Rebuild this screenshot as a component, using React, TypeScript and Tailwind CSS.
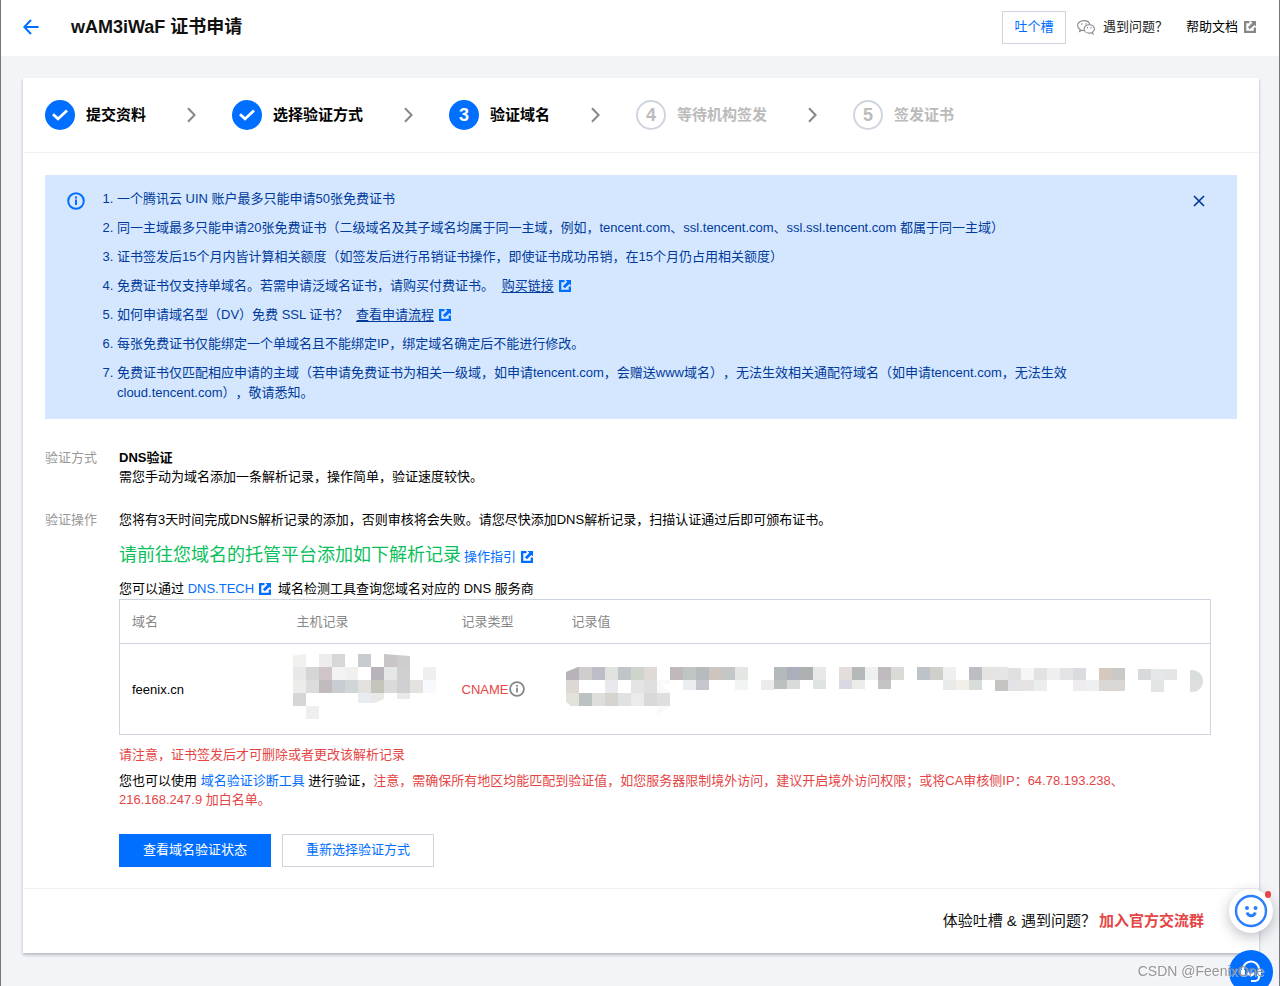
import React from "react";

type Block = [x: number, y: number, w: number, h: number, fill: string];

const hostRows: string[][] = [
  ["#f1f0ef", "", "#ededed", "#d6d7d7", "", "#c8ccd0", "", "#cac6c6", "#cdcdcf"],
  ["#e8e8e8", "#d5d5d6", "#cfc5c8", "#f3f3f3", "#f2f0ef", "", "#b9b4bb", "#e6e6e6", "#d0d0d2", "", "#efefef"],
  ["#ececeb", "#dcdcdc", "#c2bbbd", "#c9ccd0", "#d0d5d5", "#e2e1df", "#c4c4bb", "#dadada", "#d0d0d2", "#e3e2e1", "#f8f9fd"],
  ["#d6d6d6", "", "", "", "", "#e8ecf1", "#e9e9e9", "", "#e9e9e9"],
  ["", "#efefef"],
];

const valueTop: string[] = [
  "#b8b2b9", "#d0cecc", "#bdbdc9", "#dfe2de", "#bfc5c9", "#cfd4cb", "#dfdad6", "",
  "#c0b9bc", "#bfc5c3", "#b8bbbe", "#cfc5bf", "#c3c7c5", "#e3e6e3", "", "",
  "#b4b9bb", "#abafbb", "#acb0b0", "#e6e8ea", "", "#e3dedc", "#b5b9ba", "#eff1f1",
  "#c0bcbd", "#dadbd6", "", "#bdc3c8", "#cfd0c9", "#efefef", "", "#bdbec4",
  "#e5e4e3", "#e5e5e5", "#e0e0e0", "#f6f6f6", "#e0e3e1", "#efefef", "#e4e3e6", "#dbdcdf",
  "", "#d5c8be", "#c9c9c5", "", "#d7d9da", "#e4e8e8", "#e4e6e5",
];

const valueMiddle: string[] = [
  "#ddd8d3", "", "", "#e8e9ec", "", "#e4e4e3", "#dfdfe1", "",
  "", "#ebeef0", "#c5c6ce", "", "", "#f2f4f4", "", "#ebebeb",
  "#bbc0c1", "#d9dbda", "", "#dee3e4", "", "#d8d9e2", "#ebebea", "",
  "#c3c5c5", "", "", "", "", "#e9ebea", "#f2eeea", "#d8ddd9",
  "", "#c5c4c3", "#e2e3e6", "#e5e4e3", "#eceeee", "", "", "#eeecee",
  "#efefef", "#dad7d4", "#dad7d4", "", "", "#e2e5e4",
];

const valueBottom: string[] = [
  "#e3e2da", "#bcc1c2", "#dededd", "#d5d4cf", "#e0e1e3", "#ebebeb", "#d9d9d9", "#dfdfdf",
];

function toBlocks(row: string[], y: number, height: (i: number) => number, top: (i: number) => number = () => 0): Block[] {
  return row
    .map((fill, i): Block => [i * 13, y + top(i), 13, height(i) - top(i), fill])
    .filter((b) => b[4] !== "");
}

const hostBlocks: Block[] = hostRows.flatMap((row, r) =>
  toBlocks(row, r * 13, (i) => (r === 3 && i === 8 ? 6 : r === 3 && i > 4 ? 10 : 13)),
);

const drop = (i: number) => (i > 43 ? 2 : i > 33 ? 1 : 0);

const valueBlocks: Block[] = [
  ...toBlocks(valueTop, 13, () => 13, drop),
  ...toBlocks(valueMiddle, 26, (i) => (i < 8 ? 13 : i > 43 ? 12 : i > 32 ? 11 : i > 15 && i < 25 ? 9 : 10)),
  ...toBlocks(valueBottom, 39, () => 13),
];

function Blocks({ blocks }: { blocks: Block[] }) {
  return (
    <>
      {blocks.map(([x, y, w, h, fill]) => (
        <rect key={`${x}-${y}`} x={x} y={y} width={w} height={h} fill={fill} />
      ))}
    </>
  );
}

function ExternalIcon({ className = "" }: { className?: string }) {
  return (
    <svg viewBox="0 0 12 12" className={`inline-block h-3 w-3 ${className}`} fill="currentColor" aria-hidden="true">
      <path d="M0 0h5.500v2.300H2.300v7.400h7.400V6.500H12V12H0z" />
      <path d="M6.500 0H12v5.500L10.300 3.900 5.900 8.300 3.900 6.300l4.400-4.500z" />
    </svg>
  );
}

function WechatIcon() {
  return (
    <svg viewBox="0 0 18 15" className="h-[15px] w-[18px]" fill="none" stroke="#888" strokeWidth="1.1" aria-hidden="true">
      <path d="M7.2 10.6c-.8 0-1.6-.1-2.3-.4L2.6 11.4l.6-2C1.600 8.500.6 7.100.6 5.600.600 2.800 3.400.6 6.800.6c3 0 5.500 1.700 6.100 4" />
      <path d="M12.300 4.700c-2.900 0-5.200 1.900-5.200 4.200s2.300 4.200 5.200 4.200c.6 0 1.200-.1 1.800-.3l1.900 1-.5-1.700c1.200-.8 1.900-1.900 1.900-3.200 0-2.300-2.300-4.200-5.100-4.200z" />
      <g fill="#888" stroke="none">
        <circle cx="4.700" cy="4" r=".8" />
        <circle cx="8.900" cy="4" r=".8" />
        <circle cx="10.500" cy="7.700" r=".7" />
        <circle cx="14" cy="7.700" r=".7" />
      </g>
    </svg>
  );
}

function InfoIcon({ className = "" }: { className?: string }) {
  return (
    <svg viewBox="0 0 18 18" className={className} fill="none" stroke="currentColor" strokeWidth="2" aria-hidden="true">
      <circle cx="9" cy="9" r="7.800" />
      <path d="M9 7.500v5.500M9 4.500v2" />
    </svg>
  );
}

const steps = [
  { label: "提交资料", state: "done" },
  { label: "选择验证方式", state: "done" },
  { label: "验证域名", state: "current" },
  { label: "等待机构签发", state: "todo" },
  { label: "签发证书", state: "todo" },
];

function Steps() {
  return (
    <ol className="flex h-[75px] items-center border-b border-[#f2f2f4] px-[22px]">
      {steps.map((step, i) => (
        <li key={step.label} className="flex items-center text-[15px] font-bold">
          {step.state === "todo" ? (
            <span className="flex h-[30px] w-[30px] items-center justify-center rounded-full border-2 border-[#cfd5de] text-lg text-[#bbb]">
              {i + 1}
            </span>
          ) : (
            <span className="flex h-[30px] w-[30px] items-center justify-center rounded-full bg-[#006eff] text-lg text-white">
              {step.state === "done" ? (
                <svg viewBox="0 0 16 12" className="h-3 w-4" fill="none" stroke="#fff" strokeWidth="2.800" aria-hidden="true">
                  <path d="M1 5.300l5 4.600L15 1.500" />
                </svg>
              ) : (
                i + 1
              )}
            </span>
          )}
          <span className={step.state === "todo" ? "ml-[11px] text-[#bbb]" : "ml-[11px] text-black"}>{step.label}</span>
          {i < steps.length - 1 && (
            <span className="flex w-[86px] justify-center pl-1">
              <svg viewBox="0 0 9 16" className="h-4 w-[9px]" fill="none" stroke="#888" strokeWidth="2" aria-hidden="true">
                <path d="M1 1.200L7.600 8 1 14.800" />
              </svg>
            </span>
          )}
        </li>
      ))}
    </ol>
  );
}

function NoticeLink({ children }: { children: React.ReactNode }) {
  return (
    <a href="#" className="ml-1">
      <span className="underline underline-offset-2">{children}</span>
      <ExternalIcon className="ml-[5px] align-[-2px] text-[#006eff]" />
    </a>
  );
}

function Notice() {
  return (
    <section className="flex items-start bg-[#d5e7ff] pt-[14px] pr-8 pb-4 pl-[22px] text-[#003b9b]">
      <InfoIcon className="mt-[3px] h-[18px] w-[18px] text-[#006eff]" />
      <ol className="ml-8 flex flex-1 list-decimal flex-col gap-[9px] pr-[60px] leading-5">
        <li>一个腾讯云 UIN 账户最多只能申请50张免费证书</li>
        <li>
          同一主域最多只能申请20张免费证书（二级域名及其子域名均属于同一主域，例如，tencent.com、ssl.tencent.com、ssl.ssl.tencent.com
          都属于同一主域）
        </li>
        <li>证书签发后15个月内皆计算相关额度（如签发后进行吊销证书操作，即使证书成功吊销，在15个月仍占用相关额度）</li>
        <li>
          免费证书仅支持单域名。若需申请泛域名证书，请购买付费证书。 <NoticeLink>购买链接</NoticeLink>
        </li>
        <li>
          如何申请域名型（DV）免费 SSL 证书？ <NoticeLink>查看申请流程</NoticeLink>
        </li>
        <li>每张免费证书仅能绑定一个单域名且不能绑定IP，绑定域名确定后不能进行修改。</li>
        <li>
          免费证书仅匹配相应申请的主域（若申请免费证书为相关一级域，如申请tencent.com，会赠送www域名），无法生效相关通配符域名（如申请tencent.com，无法生效cloud.tencent.com），敬请悉知。
        </li>
      </ol>
      <button type="button" aria-label="关闭" className="mt-[6px]">
        <svg viewBox="0 0 12 12" className="h-3 w-3" fill="none" stroke="#003b9b" strokeWidth="1.700" aria-hidden="true">
          <path d="M1 1l10 10M11 1L1 11" />
        </svg>
      </button>
    </section>
  );
}

function RecordTable() {
  return (
    <table className="w-full table-fixed border-collapse border border-[#cfd5de] text-left">
      <colgroup>
        <col className="w-[165px]" />
        <col className="w-[165px]" />
        <col className="w-[110px]" />
        <col />
      </colgroup>
      <thead>
        <tr className="h-11 border-b border-[#cfd5de] text-[#888]">
          <th className="px-3 font-normal">域名</th>
          <th className="px-3 font-normal">主机记录</th>
          <th className="px-3 font-normal">记录类型</th>
          <th className="px-3 font-normal">记录值</th>
        </tr>
      </thead>
      <tbody>
        <tr className="h-[91px]">
          <td className="px-3">feenix.cn</td>
          <td className="pt-[10px] pl-2 align-top">
            <svg viewBox="0 0 144 65" className="h-[65px] w-36" aria-hidden="true">
              <Blocks blocks={hostBlocks} />
              <path d="M0 0h14L0 1.500zM91 0h26v2zM91 49v-1l-13 1zM91 45l-9 4h9z" fill="#fff" />
            </svg>
          </td>
          <td className="px-3">
            <span className="flex items-center text-[#e54545]">
              CNAME
              <InfoIcon className="ml-px h-4 w-4 shrink-0 text-[#888]" />
            </span>
          </td>
          <td className="pt-[10px] pl-[6px] align-top">
            <svg viewBox="0 0 640 65" className="h-[65px] w-[640px]" aria-hidden="true">
              <Blocks blocks={valueBlocks} />
              <path d="M0 13h12L0 18zM0 52v-4l5 4z" fill="#fff" />
              <path d="M91 26h13v4H94l10 8v1H91zM91 52h13l-13 10z" fill="#f9f9f9" />
              <path d="M624 16h2a11 11 0 0 1 11 10h-13z" fill="#d9dedc" />
              <path d="M624 26h13a11 11 0 0 1-11 12h-2z" fill="#dde0df" />
            </svg>
          </td>
        </tr>
      </tbody>
    </table>
  );
}

export default function App() {
  return (
    <div className="min-h-screen border-x border-[#777] bg-[#f3f4f7] font-['Liberation_Sans','Noto_Sans_CJK_SC',sans-serif] text-[13px] text-black [text-spacing-trim:space-all]">
      <header className="flex h-14 items-center bg-white pr-[23px] pb-[2px] pl-[22px]">
        <a href="#" aria-label="返回" className="text-[#006eff]">
          <svg viewBox="0 0 16 16" className="h-4 w-4" fill="none" stroke="currentColor" strokeWidth="2" aria-hidden="true">
            <path d="M15.500 8H1.500M8 1L1.300 8 8 15" />
          </svg>
        </a>
        <h1 className="ml-8 flex-1 text-lg font-bold text-[#111]">wAM3iWaF 证书申请</h1>
        <button type="button" className="h-[33px] w-16 border border-[#cfd5de] text-[#006eff]">
          吐个槽
        </button>
        <a href="#" className="ml-[11px] flex items-center gap-2 text-[#222]">
          <WechatIcon />
          遇到问题？
        </a>
        <a href="#" className="ml-[18px] flex items-center gap-[6px]">
          帮助文档
          <ExternalIcon className="text-[#888]" />
        </a>
      </header>

      <main className="mt-[22px] mr-5 ml-[22px] bg-white shadow-[0_2px_3px_rgba(54,58,80,0.32)]">
        <Steps />
        <div className="px-[22px] pt-[22px] pb-[21px]">
          <Notice />

          <dl className="mt-[29px] grid grid-cols-[74px_minmax(0,1fr)] gap-y-6 pr-[26px] leading-[19px]">
            <dt className="text-[#999]">验证方式</dt>
            <dd>
              <p className="font-bold">DNS验证</p>
              <p>需您手动为域名添加一条解析记录，操作简单，验证速度较快。</p>
            </dd>
            <dt className="text-[#999]">验证操作</dt>
            <dd>
              <p>您将有3天时间完成DNS解析记录的添加，否则审核将会失败。请您尽快添加DNS解析记录，扫描认证通过后即可颁布证书。</p>
              <p className="mt-3 leading-7">
                <span className="text-lg leading-7 text-[#0abf5b]">请前往您域名的托管平台添加如下解析记录</span>
                <a href="#" className="ml-[3px] text-[#006eff]">
                  操作指引
                  <ExternalIcon className="ml-[5px] align-[-2px]" />
                </a>
              </p>
              <p className="mt-2 leading-5">
                您可以通过{" "}
                <a href="#" className="text-[#006eff]">
                  DNS.TECH
                  <ExternalIcon className="ml-[5px] align-[-2px]" />
                </a>
                <span className="ml-[7px]">域名检测工具查询您域名对应的 DNS 服务商</span>
              </p>
              <RecordTable />
              <p className="mt-[10px] leading-5 text-[#e54545]">请注意，证书签发后才可删除或者更改该解析记录</p>
              <p className="mt-[6px] pr-6">
                您也可以使用{" "}
                <a href="#" className="text-[#006eff]">
                  域名验证诊断工具
                </a>{" "}
                进行验证，
                <span className="text-[#e54545]">
                  注意，需确保所有地区均能匹配到验证值，如您服务器限制境外访问，建议开启境外访问权限；或将CA审核侧IP：64.78.193.238、
                </span>
                <span className="text-[#e54545]">216.168.247.9 加白名单。</span>
              </p>
              <div className="mt-[25px] flex gap-[11px]">
                <button type="button" className="h-[33px] w-[152px] bg-[#006eff] pb-[2px] text-white">
                  查看域名验证状态
                </button>
                <button type="button" className="h-[33px] w-[152px] border border-[#cfd5de] pb-[2px] text-[#006eff]">
                  重新选择验证方式
                </button>
              </div>
            </dd>
          </dl>
        </div>
        <footer className="flex h-[65px] items-center justify-end border-t border-[#f2f2f4] pr-[55px] text-[15px] text-[#111]">
          体验吐槽 &amp; 遇到问题？
          <a href="#" className="ml-[3px] font-bold text-[#e54545]">
            加入官方交流群
          </a>
        </footer>
      </main>

      <div className="fixed right-[7px] -bottom-2 flex flex-col gap-[17px]">
        <button
          type="button"
          aria-label="评价"
          className="relative flex h-11 w-11 items-center justify-center rounded-full bg-white shadow-[0_4px_14px_rgba(54,58,80,0.32)]"
        >
          <svg viewBox="0 0 34 34" className="h-[34px] w-[34px]" fill="none" stroke="#2b7fff" strokeWidth="2.400" aria-hidden="true">
            <circle cx="17" cy="17" r="15" />
            <circle cx="13" cy="14" r="2" fill="#2b7fff" stroke="none" />
            <circle cx="21.500" cy="14" r="2" fill="#2b7fff" stroke="none" />
            <path d="M13 18.500c.8 2.200 2.300 3.200 4.200 3.200s3.400-1 4.200-3.200" strokeWidth="3" />
          </svg>
          <span className="absolute top-[2px] right-[2px] h-[7px] w-[6px] rounded-full bg-[#e54545]" />
        </button>
        <button
          type="button"
          aria-label="客服"
          className="flex h-11 w-11 items-center justify-center rounded-full bg-[#006eff]"
        >
          <svg viewBox="0 0 24 24" className="h-6 w-6" fill="none" stroke="#fff" strokeWidth="2.200" aria-hidden="true">
            <path d="M4 11V9.500a8 8 0 0 1 16 0V17a4 4 0 0 1-4 4h-4" />
            <path d="M4 10v6M20 10v6" strokeWidth="4" />
            <path d="M9 12.500c.8 2 1.800 2.700 3 2.700s2.200-.7 3-2.700" />
          </svg>
        </button>
      </div>
      <p className="pointer-events-none fixed right-4 bottom-[5px] text-sm leading-5 text-[#8c8c8c]/90 [text-shadow:1px_1px_0_rgba(255,255,255,0.5)]">
        CSDN @FeenixOne
      </p>
    </div>
  );
}
